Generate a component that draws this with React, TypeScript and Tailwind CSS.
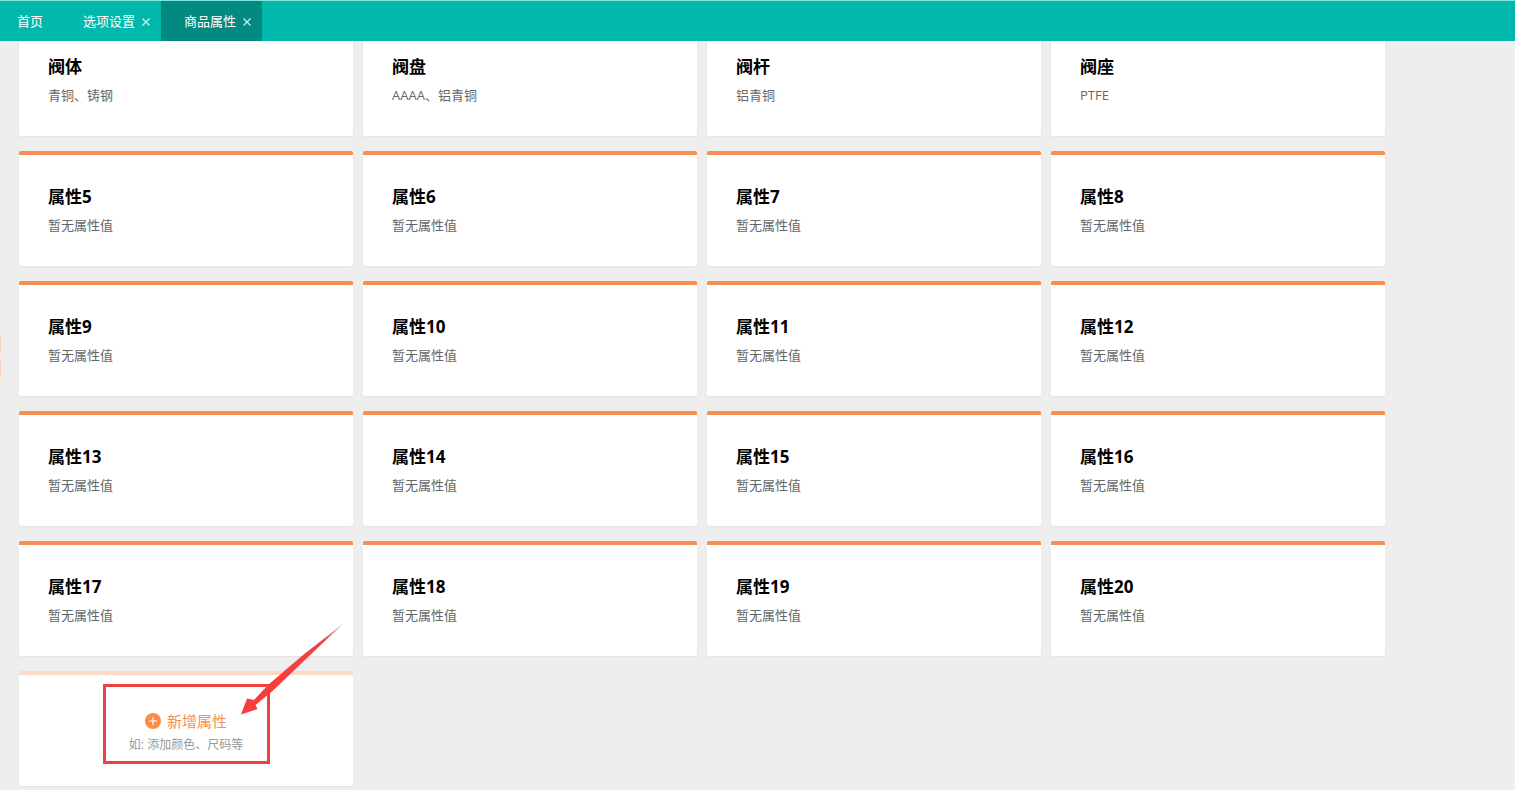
import clsx from "clsx";

const tabs = [
  { name: "选项设置", active: false },
  { name: "商品属性", active: true },
];

const attributes = [
  { name: "阀体", values: "青铜、铸钢" },
  { name: "阀盘", values: "AAAA、铝青铜" },
  { name: "阀杆", values: "铝青铜" },
  { name: "阀座", values: "PTFE" },
  ...Array.from({ length: 16 }, (_, i) => ({ name: `属性${i + 5}`, values: "" })),
];

const Header = () => {
  return (
    <header className="relative z-10 flex h-[41px] border-t border-[#7fe3dc] bg-[#00b8ac] text-[13px] text-white">
      <nav className="flex">
        <a href="#home" className="flex items-center pt-0.5 pr-[17px] pl-[17px]">首页</a>
        {tabs.map((tab) => (
          <div key={tab.name} className={clsx("flex items-center pt-0.5 pr-[9px] pl-[23px]", tab.active && "bg-[#028a80]")}>
            <a href="#tab">{tab.name}</a>
            <button type="button" aria-label={`关闭${tab.name}`} className="ml-[5px] flex h-3 w-3 items-center justify-center">
              <svg className="h-2 w-2" viewBox="0 0 8 8" fill="none" stroke="#d5f3f0" strokeWidth="1.1">
                <path d="M0.5 0.5L7.5 7.5M7.5 0.5L0.5 7.5" />
              </svg>
            </button>
          </div>
        ))}
      </nav>
    </header>
  );
};

const AttributeCard = ({ name, values }: { name: string; values: string }) => {
  return (
    <li className="h-[115px] rounded-[2px] border-t-4 border-[#f68f50] bg-white px-[29px] pt-[30px] shadow-[0_1px_2px_rgba(0,0,0,0.05)]">
      <h2 className="text-[17px] leading-6 font-bold text-black">{name}</h2>
      <p className="mt-1.5 text-[13px] leading-5 text-[#666]">{values || "暂无属性值"}</p>
    </li>
  );
};

const AddCard = () => {
  return (
    <li className="relative h-[115px] rounded-[2px] border-t-4 border-[#fcdac6] bg-white shadow-[0_1px_2px_rgba(0,0,0,0.05)]">
      <button type="button" className="flex h-full w-full flex-col items-center pt-[34px]">
        <span className="flex items-center gap-1.5 text-[15px] leading-6 text-[#f68f50]">
          <svg className="h-4 w-4" viewBox="0 0 16 16">
            <circle cx="8" cy="8" r="8" fill="#fb8b46" />
            <path d="M8 4v8M4 8h8" stroke="#fff" strokeWidth="1.2" />
          </svg>
          新增属性
        </span>
        <span className="mt-1 text-[12px] leading-4 text-[#999]">如: 添加颜色、尺码等</span>
      </button>

      {/* highlight frame and arrow */}
      <div className="pointer-events-none absolute top-[9px] left-[84px] h-20 w-[167px] border-[3px] border-[#f04142]" />
      <svg className="pointer-events-none absolute -top-[52px] left-[221px] h-[94px] w-[104px]" viewBox="0 0 104 94">
        <defs>
          <linearGradient id="arrow" x1="1" y1="0" x2="0" y2="1">
            <stop offset="0" stopColor="#f9b4b4" />
            <stop offset="0.2" stopColor="#e84646" />
            <stop offset="0.6" stopColor="#fb3b3c" />
          </linearGradient>
        </defs>
        <path d="M104 0L63 32L28 62L14 77L7 75.500L1 91.500L17.500 86L15.500 82L32 68.500L66 36Z" fill="url(#arrow)" />
      </svg>
    </li>
  );
};

export default function App() {
  return (
    <div className="min-h-screen overflow-hidden bg-[#eee] font-['Open_Sans','Noto_Sans_CJK_SC',sans-serif]">
      <Header />
      <div className="relative flow-root">
        {/* edge of the collapsed side handle */}
        <div className="absolute top-[296px] left-0 flex flex-col gap-2">
          <span className="h-4 w-px bg-[#f8cfb8]" />
          <span className="h-4 w-px bg-[#f8cfb8]" />
        </div>
        <main className="-mt-5 pr-[130px] pb-1 pl-[19px]">
          <ul className="grid grid-cols-4 gap-x-2.5 gap-y-[15px]">
            {attributes.map((item) => (
              <AttributeCard key={item.name} {...item} />
            ))}
            <AddCard />
          </ul>
        </main>
      </div>
    </div>
  );
}
